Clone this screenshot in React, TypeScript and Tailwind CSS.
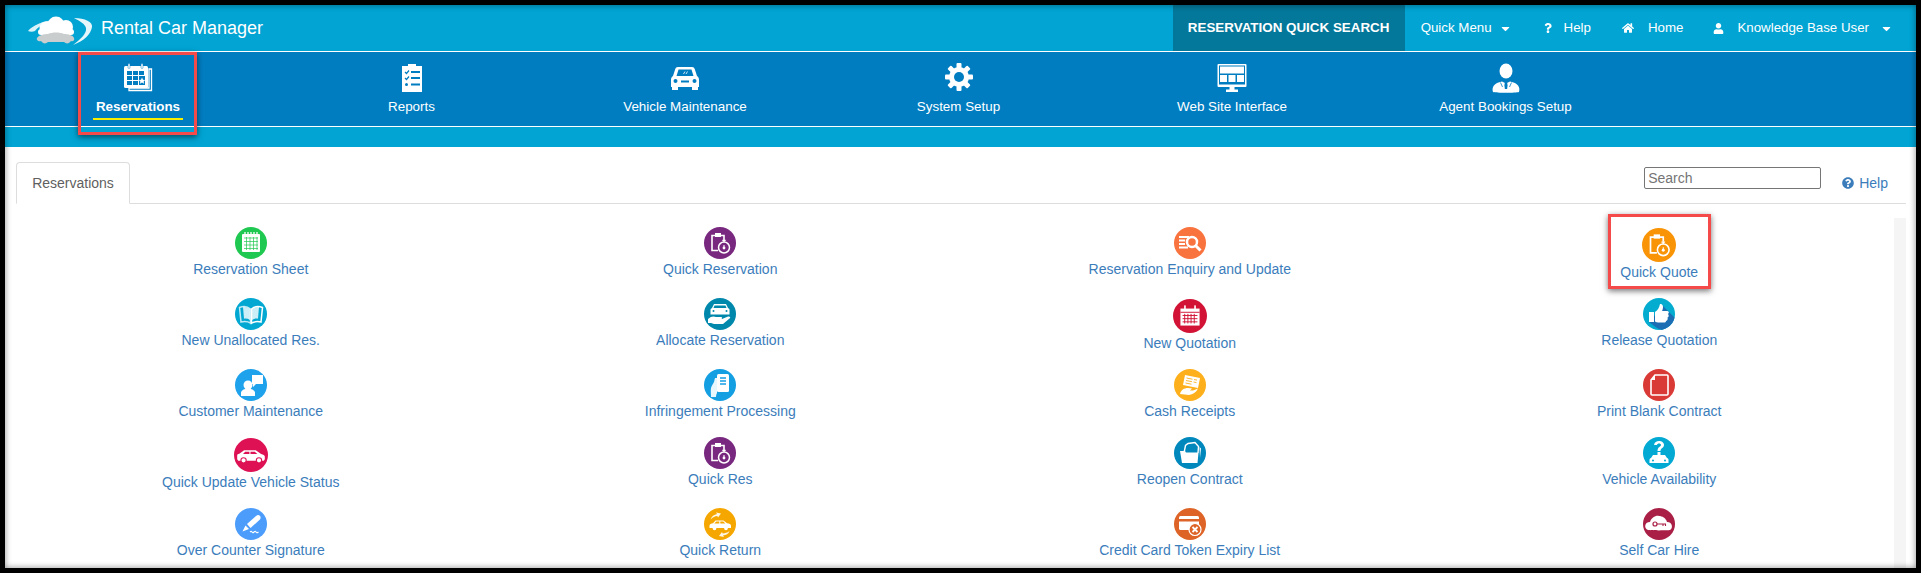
import type { ReactNode } from "react";
import { FaCaretDown, FaHome, FaQuestion, FaQuestionCircle, FaUser } from "react-icons/fa";

const Logo = () => (
  <svg width="66" height="30" viewBox="0 0 66 30" className="shrink-0 mt-[4px]">
    <path d="M1 16C6 10 16 6 27 5C17 8 11 12 8 16C6 17 3 17 1 16Z" fill="#fff" opacity="0.85" />
    <path d="M47 3C58 3 66 7 65 12C64 19 57 26 46 30C54 24 60 18 59 13C58 9 53 6 47 3Z" fill="#fff" opacity="0.9" />
    <circle cx="29" cy="10" r="8.500" fill="#fff" />
    <circle cx="19" cy="13" r="6.500" fill="#fff" />
    <circle cx="39" cy="12" r="7" fill="#fff" />
    <rect x="11" y="14" width="36" height="6" rx="3" fill="#fff" />
    <path d="M10 23C12 20 17 19 21 19C25 17 33 17 37 19C41 19 46 20 47 23C48 25 46 27 44 26C42 29 39 29 37 27L21 27C19 29 16 29 14 26C12 27 9 25 10 23Z" fill="#c9cdce" />
  </svg>
);

const CalendarNav = () => (
  <svg width="30" height="30" viewBox="0 0 30 30">
    <path d="M26 6h2.500v21.500H6V25h20z" fill="none" stroke="#fff" strokeWidth="1.300" />
    <rect x="1" y="3" width="24" height="22" rx="1.500" fill="#fff" />
    <rect x="5" y="0.500" width="2" height="5" rx="1" fill="#fff" stroke="#007dc1" strokeWidth="0.500" />
    <rect x="18" y="0.500" width="2" height="5" rx="1" fill="#fff" stroke="#007dc1" strokeWidth="0.500" />
    <path d="M4 8h5v4H4zM10 8h5v4h-5zM16 8h5v4h-5zM4 13h5v4H4zM10 13h5v4h-5zM4 18h5v4H4zM10 18h5v4h-5z" fill="#007dc1" />
    <rect x="16" y="13" width="6" height="9" fill="#007dc1" />
    <path d="M19 14.500l1 2.200 2.300.2-1.700 1.500.5 2.300-2.100-1.200-2.100 1.200.5-2.300-1.700-1.500 2.300-.2z" fill="#fff" />
  </svg>
);

const ReportsNav = () => (
  <svg width="30" height="30" viewBox="0 0 30 30">
    <path d="M5 3h6V1h8v2h6v26H5z" fill="#fff" />
    <path d="M8 9l1.500 1.500L12 7.500M8 15l1.500 1.500L12 13.500" fill="none" stroke="#007dc1" strokeWidth="1.200" />
    <path d="M14 9h9M14 15h9M14 21.500h9" stroke="#007dc1" strokeWidth="1.800" />
    <circle cx="9.500" cy="21.500" r="1.500" fill="#007dc1" />
  </svg>
);

const CarNav = () => (
  <svg width="30" height="30" viewBox="0 0 30 30">
    <path d="M8 4h14c1.500 0 2.300.8 2.800 2.300L27 13c1.500 1 2 2 2 4v7h-1v3h-6v-3H8v3H2v-3H1v-7c0-2 .5-3 2-4l2.200-6.700C5.700 4.800 6.500 4 8 4z" fill="#fff" />
    <path d="M8.500 6.500h13L23.500 13h-17z" fill="#007dc1" />
    <circle cx="5.500" cy="18" r="2" fill="#007dc1" />
    <circle cx="24.500" cy="18" r="2" fill="#007dc1" />
    <path d="M11 18.500h8" stroke="#007dc1" strokeWidth="2" />
    <path d="M13.500 11l1.500-2.500M16 11l1.500-2.500" stroke="#fff" strokeWidth="0.800" />
  </svg>
);

const GearNav = () => (
  <svg width="30" height="30" viewBox="0 0 30 30" className="-mt-[1px]">
    <g fill="#fff">
      <rect x="12.500" y="1" width="5" height="28" rx="1" />
      <rect x="12.500" y="1" width="5" height="28" rx="1" transform="rotate(45 15 15)" />
      <rect x="12.500" y="1" width="5" height="28" rx="1" transform="rotate(90 15 15)" />
      <rect x="12.500" y="1" width="5" height="28" rx="1" transform="rotate(135 15 15)" />
    </g>
    <circle cx="15" cy="15" r="10" fill="#fff" />
    <circle cx="15" cy="15" r="5" fill="#007dc1" />
  </svg>
);

const MonitorNav = () => (
  <svg width="30" height="30" viewBox="0 0 30 30">
    <rect x="0.500" y="1" width="29" height="23" rx="1" fill="#fff" />
    <rect x="2" y="2.500" width="26" height="19" fill="#007dc1" />
    <rect x="3" y="3.500" width="24" height="7" fill="#fff" />
    <path d="M3 12h7v7H3zM11.500 12h7v7h-7zM20 12h7v7h-7z" fill="#fff" />
    <path d="M12.500 24h5v2.500h3.500V29H9v-2.500h3.500z" fill="#fff" />
  </svg>
);

const AgentNav = () => (
  <svg width="30" height="30" viewBox="0 0 30 30">
    <ellipse cx="15" cy="8" rx="6.500" ry="7.500" fill="#fff" />
    <path d="M2 29c-1.500-5 1-9 9-10.500l4 2 4-2c8 1.500 10.500 5.500 9 10.500c-3 1-23 1-26 0z" fill="#fff" />
    <path d="M13.800 20h2.400l.4 2-.5 4h-2.200l-.5-4z" fill="#007dc1" />
    <path d="M9.500 19.500l2 4.500M20.500 19.500l-2 4.500" stroke="#007dc1" strokeWidth="0.800" />
  </svg>
);

type NavItem = { label: string; icon: ReactNode; active?: boolean };

const navItems: NavItem[] = [
  { label: "Reservations", icon: <CalendarNav />, active: true },
  { label: "Reports", icon: <ReportsNav /> },
  { label: "Vehicle Maintenance", icon: <CarNav /> },
  { label: "System Setup", icon: <GearNav /> },
  { label: "Web Site Interface", icon: <MonitorNav /> },
  { label: "Agent Bookings Setup", icon: <AgentNav /> },
];

const Clipboard = () => (
  <g>
    <path d="M14 23.500H8V8.500h12V13" fill="none" stroke="#fff" strokeWidth="1.600" />
    <path d="M11 6h6v4h-6z" fill="#fff" />
    <circle cx="20" cy="20.500" r="5.500" fill="none" stroke="#fff" strokeWidth="1.500" />
    <path d="M18.300 13.300h3.400M20 13.500v1.500" stroke="#fff" strokeWidth="1.300" />
    <circle cx="20" cy="21" r="1.400" fill="#fff" />
    <path d="M20 21v-3" stroke="#fff" strokeWidth="1" />
  </g>
);

const icons: Record<string, ReactNode> = {
  sheet: (
    <g>
      <rect x="7" y="7" width="18" height="18" rx="1" fill="#fff" />
      <path d="M10 5v4M13 5v4M16 5v4M19 5v4M22 5v4" stroke="#fff" strokeWidth="1.300" />
      <path d="M9 11h14M9 14.500h14M9 18h14M9 21.500h14M11.500 10v13M15 10v13M18.500 10v13M22 10v13" stroke="#1fc851" strokeWidth="0.700" />
    </g>
  ),
  book: (
    <g>
      <path d="M4.500 9.500l1.500 14.500c3.800-.8 7-.5 9.500 1.200V11C12.500 8.500 8.500 8 4.500 9.500z" fill="none" stroke="#bfeaf6" strokeWidth="1.500" />
      <path d="M27.500 9.500l-1.500 14.500c-3.800-.8-7-.5-9.500 1.200V11C19.500 8.500 23.500 8 27.500 9.500z" fill="none" stroke="#fff" strokeWidth="1.500" />
      <path d="M8 9c2.500-.3 5 .4 7 2v11c-2-1.300-4-1.700-6-1.300z" fill="#fff" opacity="0.8" />
      <path d="M24 9c-2.500-.3-5 .4-7 2v11c2-1.300 4-1.700 6-1.300z" fill="#fff" opacity="0.8" />
    </g>
  ),
  customer: (
    <g fill="#fff">
      <circle cx="13" cy="16" r="4.500" />
      <path d="M6 27v-3c0-2.500 3-3.800 5-4.200h4c2 .4 5 1.700 5 4.200v3z" />
      <path d="M17 6h11v9h-7l-3 3v-3h-1z" />
    </g>
  ),
  suv: (
    <g>
      <path d="M3 20v-3.500c0-1 .8-1.500 2-1.700L9.500 11.500h11l5 3.500c2 .4 3.500 1.200 3.500 2.500V20l-1 1.500H4z" fill="#fff" />
      <path d="M10.500 13h4v2H8.500zM15.500 13h4l2.500 2h-6.500z" fill="#dd1154" />
      <circle cx="9" cy="21" r="2.500" fill="#fff" stroke="#dd1154" strokeWidth="1" />
      <circle cx="23.500" cy="21" r="2.500" fill="#fff" stroke="#dd1154" strokeWidth="1" />
    </g>
  ),
  pen: (
    <g fill="#fff">
      <path d="M12 16l9-8c1.500-1.300 3-1.300 4 0s.8 2.700-.3 3.800L15.500 20z" />
      <path d="M10.500 17.500l3.500 3.500-6.500 2.500z" />
      <path d="M15 24c1-1 1.500-1 2 0s1 1 2 0 1.500-1 2 0 1 1 2.500 0" fill="none" stroke="#fff" strokeWidth="1.100" />
    </g>
  ),
  carHand: (
    <g fill="#fff">
      <path d="M10 6h12l2 4c1 .5 1.500 1 1.500 2v4.500h-19V12c0-1 .5-1.500 1.500-2z" />
      <path d="M10.500 7.500h11l1 2.500h-13z" fill="#0088ac" />
      <circle cx="9.500" cy="13" r="1" fill="#0088ac" />
      <circle cx="22.500" cy="13" r="1" fill="#0088ac" />
      <path d="M4 21c3-3 6-3 8-2h5c1.500 0 1.500 2 0 2h-3 4l6-2.500c2-.5 3 1 1.500 2L19 26H10l-3-1H4z" />
    </g>
  ),
  phoneHand: (
    <g fill="#fff">
      <rect x="13" y="5" width="12" height="18" rx="1.500" />
      <path d="M16 9h6M16 12h6M16 15h6" stroke="#159fe3" strokeWidth="1.300" />
      <path d="M11 9l2 0 0 15c-1 2-1 3-1 4H7c0-4-.5-6 0-9 .5-2 2-4 3-6z" fill="#e8f6fd" />
    </g>
  ),
  returnCar: (
    <g fill="#fff">
      <path d="M5.500 20v-2.500c0-1.200 1.500-2 3.500-2.200l2.500-2.800h8l3.500 2.800c2.500.2 4 1 4 2.500V20z" />
      <path d="M12.300 13.500h3v2h-5zM16.300 13.500h3l2 2h-5z" fill="#f5a700" />
      <circle cx="10.500" cy="20.500" r="1.800" />
      <circle cx="22" cy="20.500" r="1.800" />
      <path d="M6.500 11.500c1-3 3.500-5 6.500-5.500l-1-1.500 5 1-3 4-.7-1.500c-2.300.3-4.500 1.300-6.800 3.500z" opacity="0.9" />
      <path d="M25.500 23c-1 3-3.500 4-6.500 4.500l1 1.500-5-1 3-4 .7 1.500c2.300-.3 4.500-.6 6.800-2.500z" opacity="0.9" />
    </g>
  ),
  enquiry: (
    <g fill="#fff">
      <path d="M5 9h10v2H5zM5 12.500h6v2H5zM5 16h6v2H5zM5 19.500h9v2H5z" />
      <circle cx="18" cy="15" r="5" fill="none" stroke="#fff" strokeWidth="2.500" />
      <path d="M21.500 18.500l5 5" stroke="#fff" strokeWidth="3" />
    </g>
  ),
  quotation: (
    <g fill="#fff">
      <path d="M7 9h18v16H7z" />
      <rect x="10.500" y="6" width="1.500" height="5" />
      <rect x="20" y="6" width="1.500" height="5" />
      <path d="M7 12.500h18M9 15.500h14M9 18.500h14M9 21.500h14M11 14v9M14 14v9M17 14v9M20 14v9" stroke="#d21336" strokeWidth="0.900" />
    </g>
  ),
  cash: (
    <g fill="#fff">
      <path d="M11 6l15 3-2 10-15-3z" />
      <path d="M12.500 9l6 1.200M12 11.500l6 1.200M11.500 14l6 1.200M20 10.500l3 .6M19.500 13l3 .6" stroke="#fdb01c" strokeWidth="0.900" />
      <path d="M6 25c1-4 4-6 8-6l4 .5-2 2c3 .3 5-.5 8-2-2 4-5 6-9 6.500z" />
    </g>
  ),
  folder: (
    <g>
      <path d="M10 16L11.500 8.500 14 6.500 21 5.500 24.500 9.500 24 16" fill="none" stroke="#fff" strokeWidth="1.400" />
      <path d="M6 14h5l1 1.500h12.500L23.500 26H8z" fill="#fff" />
      <path d="M25.500 10l1.500 1.500-1 9.500z" fill="#fff" />
    </g>
  ),
  cardX: (
    <g>
      <rect x="5" y="8" width="20" height="14" rx="1.500" fill="#fff" />
      <rect x="5" y="11" width="20" height="2.500" fill="#de6326" />
      <circle cx="21" cy="21.500" r="6" fill="#de6326" stroke="#fff" strokeWidth="1.200" />
      <path d="M18.500 19l5 5M23.500 19l-5 5" stroke="#fff" strokeWidth="1.800" />
    </g>
  ),
  thumb: (
    <g>
      <clipPath id="thumb-clip">
        <circle cx="16" cy="16" r="16" />
      </clipPath>
      <path d="M20 8l16 16-8 12-14-6-8-6z" fill="#1b6eb4" clipPath="url(#thumb-clip)" />
      <path d="M6 14h5v10H6zM12 14c3-2 4-4 5-8 2-.5 3 1 3 3 0 1.500-.5 3-1 4h5c2 0 2.500 2 1 3 1 1 1 3-.5 3.500.5 1.500 0 3-1.500 3.500 0 1-1 1.500-2 1.500H15c-1 0-2-.5-3-1z" fill="#fff" />
    </g>
  ),
  page: (
    <g>
      <path d="M12 6h12c.8 0 1 .3 1 1v18c0 .7-.2 1-1 1H9c-.8 0-1-.3-1-1V11z" fill="none" stroke="#fff" strokeWidth="1.600" />
      <path d="M8 11l4-5v5z" fill="#fff" />
    </g>
  ),
  carQuestion: (
    <g fill="#fff">
      <path d="M11 8c.5-3 2.500-4 5-4s5 1.500 5 4c0 3-3.500 3-3.500 6h-3c0-4 3-4 3.500-6 0-1-1-1.500-2-1.500s-2 .5-2 1.500z" />
      <rect x="14.500" y="15" width="3" height="3" />
      <path d="M10 18h12l2 3c1 .3 1.500 1 1.500 2v3h-19v-3c0-1 .5-1.700 1.500-2z" />
      <circle cx="10" cy="23.500" r="1" fill="#02a9d3" />
      <circle cx="22" cy="23.500" r="1" fill="#02a9d3" />
    </g>
  ),
  cloudKey: (
    <g>
      <path d="M5 22c-4-1-4-8 2-8 1-4 6-7 9-6 3 0 7 2 8 6 6 0 6 7 3 8-1 .5-21 .5-22 0z" fill="#fff" />
      <circle cx="12" cy="16" r="2" fill="none" stroke="#a91f45" strokeWidth="1.200" />
      <path d="M14 16h9M20 16v2M22.500 16v2" stroke="#a91f45" strokeWidth="1.100" />
    </g>
  ),
};

type Tile = {
  label: string;
  bg: string;
  icon: ReactNode;
  tall?: boolean;
};

const clip = <Clipboard />;

const rows: Tile[][] = [
  [
    { label: "Reservation Sheet", bg: "#1fc851", icon: icons.sheet },
    { label: "Quick Reservation", bg: "#78287e", icon: clip },
    { label: "Reservation Enquiry and Update", bg: "#f9733f", icon: icons.enquiry },
    { label: "Quick Quote", bg: "#f99406", icon: clip, tall: true },
  ],
  [
    { label: "New Unallocated Res.", bg: "#02a8d1", icon: icons.book },
    { label: "Allocate Reservation", bg: "#0088ac", icon: icons.carHand },
    { label: "New Quotation", bg: "#d21336", icon: icons.quotation, tall: true },
    { label: "Release Quotation", bg: "#04acd0", icon: icons.thumb },
  ],
  [
    { label: "Customer Maintenance", bg: "#1ea2ec", icon: icons.customer },
    { label: "Infringement Processing", bg: "#159fe3", icon: icons.phoneHand },
    { label: "Cash Receipts", bg: "#fdb01c", icon: icons.cash },
    { label: "Print Blank Contract", bg: "#da3a36", icon: icons.page },
  ],
  [
    { label: "Quick Update Vehicle Status", bg: "#dd1154", icon: icons.suv, tall: true },
    { label: "Quick Res", bg: "#78287e", icon: clip },
    { label: "Reopen Contract", bg: "#0088bc", icon: icons.folder },
    { label: "Vehicle Availability", bg: "#02a9d3", icon: icons.carQuestion },
  ],
  [
    { label: "Over Counter Signature", bg: "#4c9cfb", icon: icons.pen },
    { label: "Quick Return", bg: "#f5a700", icon: icons.returnCar },
    { label: "Credit Card Token Expiry List", bg: "#de6326", icon: icons.cardX },
    { label: "Self Car Hire", bg: "#a91f45", icon: icons.cloudKey },
  ],
];

const TileLink = ({ tile }: { tile: Tile }) => (
  <a className="flex flex-col items-center text-[14px] leading-5 text-[#3b7dbb] whitespace-nowrap">
    <span className={tile.tall ? "h-[35px] flex items-center" : "h-8 flex"}>
      <svg
        width={tile.tall ? 34 : 32}
        height={tile.tall ? 34 : 32}
        viewBox="0 0 32 32"
      >
        <circle cx="16" cy="16" r="16" fill={tile.bg} />
        {tile.icon}
      </svg>
    </span>
    {tile.label}
  </a>
);

const App = () => {
  return (
    <div className="relative w-[1921px] h-[573px] overflow-hidden bg-black pt-[5px] pl-[5px] pr-[5px] pb-[5px] font-['Liberation_Sans',Arial,sans-serif]">
      <div className="relative w-[1911px] h-[563px] overflow-hidden bg-white">
        <header className="h-[46px] bg-[#01a4d3] flex items-center text-white text-[13.3px]">
          <div className="ml-[22px]">
            <Logo />
          </div>
          <span className="ml-[8px] text-[18px]">Rental Car Manager</span>
          <div className="ml-auto h-full flex items-center pr-[23px]">
            <div className="h-full w-[232px] bg-[#04789a] flex items-center justify-center font-bold text-[13.4px] uppercase">
              Reservation Quick Search
            </div>
            <span className="ml-4">Quick Menu</span>
            <FaCaretDown className="ml-[7px] text-[13px]" />
            <FaQuestion className="ml-[31px] text-[10px]" />
            <span className="ml-[11px]">Help</span>
            <FaHome className="ml-[31px] text-[12px]" />
            <span className="ml-[14px]">Home</span>
            <FaUser className="ml-[30px] text-[11px]" />
            <span className="ml-[13px]">Knowledge Base User</span>
            <FaCaretDown className="ml-[11px] text-[13px]" />
          </div>
        </header>

        <nav className="border-y border-white h-[76px] bg-[#007dc1] flex gap-[33.5px] pl-[13px] text-white text-[13.4px]">
          {navItems.map((item) => (
            <a key={item.label} className="w-[240px] flex flex-col items-center pt-[11px]">
              <span className="h-[30px]">{item.icon}</span>
              <span className={`mt-[4px] px-[3px] pb-[1px] leading-5 ${item.active ? "font-bold border-b-2 border-[#f7ee00]" : ""}`}>
                {item.label}
              </span>
            </a>
          ))}
        </nav>
        <div className="h-[20px] bg-[#01a4d3]" />

        <div className="ml-[11px] mt-[15px] w-[1890px] h-[42px] flex justify-between border-b border-[#ddd] pr-[18px]">
          <div className="w-[114px] h-[42px] bg-white border border-[#ddd] border-b-white rounded-t flex items-center justify-center text-[14px] text-[#5f5f5f]">
            Reservations
          </div>
          <div className="flex items-start">
            <input
              placeholder="Search"
              className="mt-[5px] w-[177px] h-[22px] border border-[#767676] rounded-[2px] px-[3px] text-[14px] placeholder:text-[#757575]"
            />
            <a className="ml-[21px] mt-[12px] flex items-center gap-[5px] text-[14px] leading-[18px] text-[#3b7dbb]">
              <FaQuestionCircle className="text-[12px]" />
              Help
            </a>
          </div>
        </div>

        <div className="flex ml-[11px]">
          <div className="w-[1878px] pt-[23px] grid grid-cols-4 grid-rows-[71px_71px_68px_71px_60px]">
            {rows.flat().map((tile) => (
              <TileLink key={tile.label} tile={tile} />
            ))}
          </div>
          <div className="mt-[14px] w-[12px] h-[350px] bg-[#f5f5f5]" />
        </div>

        {/* callouts drawn over the screenshot */}
        <div className="absolute left-[73px] top-[47px] w-[119px] h-[83px] border-[3px] border-[#f54a4a] shadow-[0_2px_6px_rgba(0,0,0,0.55)]" />
        <div className="absolute left-[1603px] top-[209px] w-[103px] h-[75px] border-[3px] border-[#f54a4a] shadow-[0_2px_6px_rgba(0,0,0,0.55)]" />
        <div className="absolute inset-0 pointer-events-none shadow-[inset_0_0_6px_rgba(0,0,0,0.45)]" />
      </div>
    </div>
  );
};

export default App;
